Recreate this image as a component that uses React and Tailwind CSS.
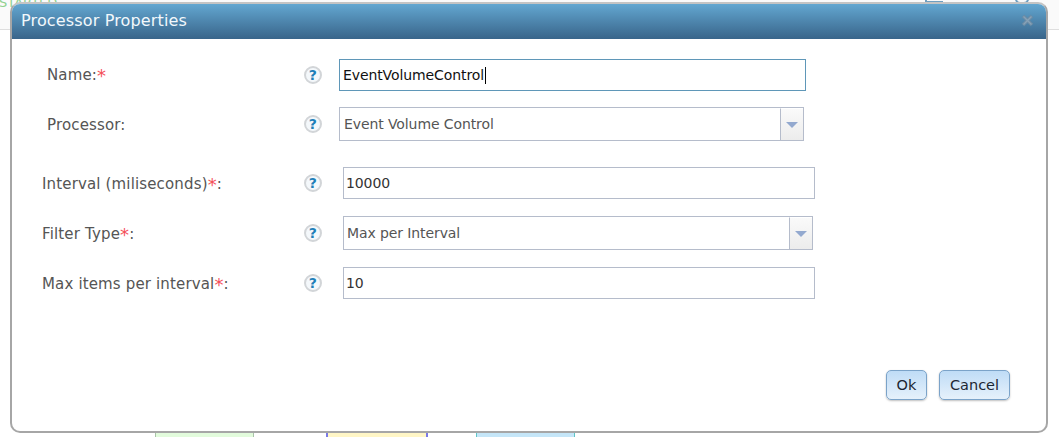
import React from 'react';

const font = 'font-["DejaVu_Sans",Verdana,sans-serif]';

const HelpIcon = () => (
  <span className="flex h-[18px] w-[18px] shrink-0 items-center justify-center rounded-full border-2 border-[#d2d5d8] bg-[#f4f8fb] text-[14px] font-semibold leading-none text-[#1f7fb8]">
    ?
  </span>
);

const Req = () => <span className="align-[-2px] text-[18px] leading-none text-[#f4505a]">*</span>;

const Row = ({ label, className, children }) => (
  <div className={`flex items-center ${className}`}>
    {label}
    <div className="flex w-[18px] shrink-0 justify-center"><HelpIcon /></div>
    {children}
  </div>
);

const Combo = ({ value, className, pad = 'pl-[4px]' }) => (
  <div className={`flex h-[34px] items-stretch border border-[#b5bccb] bg-white ${className}`}>
    <div className={`flex flex-1 items-center text-[14px] tracking-[-0.1px] text-[#555] ${pad}`}>{value}</div>
    <div className="flex w-[23px] items-center justify-center border-l border-t border-[#b5bccb] border-t-white bg-gradient-to-b from-[#fafafa] to-[#ececec]">
      <span className="h-0 w-0 border-x-[6px] border-t-[6px] border-x-transparent border-t-[#93a9cf]" />
    </div>
  </div>
);

const TextBox = ({ value, className }) => (
  <div className={`flex h-[32px] items-center border border-[#b5bccb] bg-white pl-[2px] text-[14px] tracking-[-0.1px] text-[#333] ${className}`}>
    {value}
  </div>
);

const Btn = ({ children, className }) => (
  <button className={`h-[30px] rounded-[5px] border border-[#7ba3c9] bg-gradient-to-b from-[#bfdcf6] to-[#e6f1fb] pt-[2px] text-[14.5px] text-[#1c2733] shadow-[0_1px_2px_rgba(0,0,0,0.25)] ${className}`}>
    {children}
  </button>
);

export default function App() {
  return (
    <div className={`relative h-[437px] w-[1059px] overflow-hidden bg-white ${font}`}>
      {/* page behind the dialog */}
      <div className="absolute inset-x-0 top-0 h-[30px] border-b border-[#dedede] bg-[#fafafa]" />
      <div className="absolute left-[-1px] top-[-7px] text-[13px] text-[#8fd18f]">STARTED</div>
      <div className="absolute left-[925px] top-0 h-[3px] w-[18px] border-b-2 border-l-2 border-[#6f9fc0]" />
      <div className="absolute left-[1015px] top-[-6px] h-[10px] w-[14px] rounded-full border-2 border-[#6f9fc0]" />
      <div className="absolute bottom-0 left-[155px] h-[5px] w-[99px] border-x border-[#a9c2a9] bg-[#e2fbdc]" />
      <div className="absolute bottom-0 left-[326px] h-[5px] w-[102px] border-x-2 border-[#7a7ae6] bg-[#fff6c6]" />
      <div className="absolute bottom-0 left-[476px] h-[5px] w-[99px] border-x border-[#5fc6c6] bg-[#c5e6f8]" />

      {/* dialog */}
      <div className="relative ml-[10px] mt-[2px] flex h-[431px] w-[1038px] flex-col overflow-hidden rounded-[10px] border-2 border-[#a6a6a6] border-t-[#c4c4c4] bg-white">
        <div className="flex h-[35px] shrink-0 items-center justify-between bg-gradient-to-b from-[#63a7d1] to-[#39658a] pb-[2px] pl-[9px] pr-[12px] pt-[1px]">
          <span className="text-[16px] tracking-[0.15px] text-[#f2f8fc]">Processor Properties</span>
          <svg className="mb-[2px]" width="13" height="13" viewBox="0 0 13 13" fill="none">
            <path d="M2 2l9 9M11 2l-9 9" stroke="#6b8ba5" strokeWidth="3.6" />
            <path d="M2.5 2.5l8 8M10.5 2.5l-8 8" stroke="#87a2b7" strokeWidth="1.4" />
          </svg>
        </div>

        <div className="flex-1 text-[15px] tracking-[0.15px] text-[#555]">
          <Row className="mt-[20px] h-[32px]" label={<div className="w-[292px] shrink-0 pl-[35px]">Name:<Req /></div>}>
            <div className="ml-[17px] flex h-[32px] w-[467px] items-center border border-[#5f97b8] pl-[3px] text-[14px] tracking-[-0.1px] text-[#111]">
              EventVolumeControl<span className="ml-[1px] h-[17px] w-px bg-black" />
            </div>
          </Row>
          <Row className="mt-[16px] h-[34px]" label={<div className="w-[292px] shrink-0 pl-[35px] pt-[2px]">Processor:</div>}>
            <Combo value="Event Volume Control" className="ml-[17px] w-[465px]" />
          </Row>
          <Row className="mt-[26px] h-[32px]" label={<div className="w-[292px] shrink-0 pl-[30px] pt-[2px]">Interval (miliseconds)<Req />:</div>}>
            <TextBox value="10000" className="ml-[21px] w-[472px]" />
          </Row>
          <Row className="mt-[17px] h-[34px]" label={<div className="w-[292px] shrink-0 pl-[30px] pt-[2px]">Filter Type<Req />:</div>}>
            <Combo value="Max per Interval" pad="pl-[3px]" className="ml-[21px] w-[470px]" />
          </Row>
          <Row className="mt-[17px] h-[32px]" label={<div className="w-[292px] shrink-0 pl-[30px] pt-[2px]">Max items per interval<Req />:</div>}>
            <TextBox value="10" className="ml-[21px] w-[472px]" />
          </Row>
        </div>

        <div className="flex justify-end gap-[12px] pb-[31px] pr-[36px]">
          <Btn className="w-[41px]">Ok</Btn>
          <Btn className="w-[71px]">Cancel</Btn>
        </div>
      </div>
    </div>
  );
}
